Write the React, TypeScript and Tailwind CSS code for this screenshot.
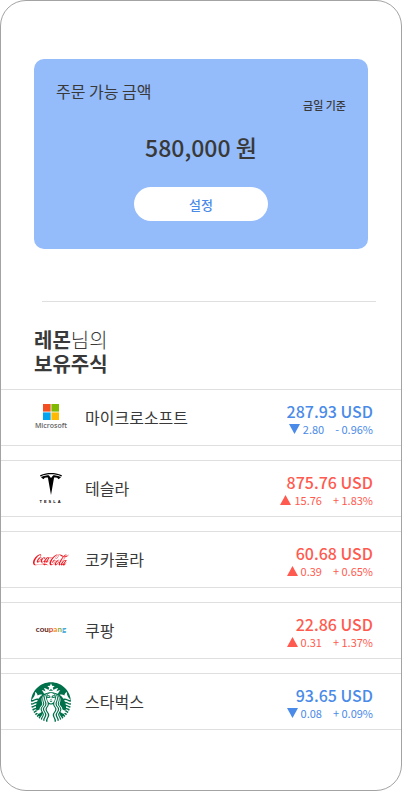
import type { ReactNode } from 'react';
import { SiCocacola, SiStarbucks, SiTesla } from 'react-icons/si';

type Stock = {
  name: string;
  price: string;
  change: string;
  rate: string;
  arrow: 'up' | 'down';
  logo: ReactNode;
};

function MicrosoftLogo() {
  return (
    <div className="flex flex-col items-center">
      <svg viewBox="0 0 16 16" className="size-4" aria-hidden="true">
        <rect width="7.6" height="7.6" fill="#f25022" />
        <rect x="8.4" width="7.6" height="7.6" fill="#7fba00" />
        <rect y="8.4" width="7.6" height="7.6" fill="#00a4ef" />
        <rect x="8.4" y="8.4" width="7.6" height="7.6" fill="#ffb900" />
      </svg>
      <span className="font-['Open_Sans',sans-serif] text-[7px] leading-[11px] font-semibold text-[#666666]">
        Microsoft
      </span>
    </div>
  );
}

function TeslaLogo() {
  return (
    <div className="flex flex-col items-center text-black">
      <SiTesla className="size-[22px]" aria-hidden="true" />
      <span className="mt-1 font-['Liberation_Sans',sans-serif] text-[4px] leading-[6px] font-bold tracking-[2px]">
        TESLA
      </span>
    </div>
  );
}

function CoupangLogo() {
  return (
    <span className="pb-1 font-['Lato',sans-serif] text-[8px] leading-3 font-bold text-[#5a2320]">
      cou<span className="text-[#d9452c]">p</span>
      <span className="text-[#f0901e]">a</span>
      <span className="text-[#8fae3a]">n</span>
      <span className="text-[#35a3d8]">g</span>
    </span>
  );
}

const stocks: Stock[] = [
  { name: '마이크로소프트', price: '287.93', change: '2.80', rate: '- 0.96%', arrow: 'down', logo: <MicrosoftLogo /> },
  { name: '테슬라', price: '875.76', change: '15.76', rate: '+ 1.83%', arrow: 'up', logo: <TeslaLogo /> },
  {
    name: '코카콜라',
    price: '60.68',
    change: '0.39',
    rate: '+ 0.65%',
    arrow: 'up',
    logo: <SiCocacola className="size-9 text-[#ed1c24]" aria-hidden="true" />,
  },
  { name: '쿠팡', price: '22.86', change: '0.31', rate: '+ 1.37%', arrow: 'up', logo: <CoupangLogo /> },
  {
    name: '스타벅스',
    price: '93.65',
    change: '0.08',
    rate: '+ 0.09%',
    arrow: 'down',
    logo: <SiStarbucks className="size-10 text-[#00704a]" aria-hidden="true" />,
  },
];

function StockRow({ stock }: { stock: Stock }) {
  const up = stock.arrow === 'up';
  return (
    <li className="flex h-[57px] items-center border-y border-[#dfdfdf] pr-7 pl-[30px]">
      <div className="flex w-10 shrink-0 justify-center">{stock.logo}</div>
      <span className="ml-[14px] pb-[2px] text-base leading-6">{stock.name}</span>
      <div className={`ml-auto pt-[2px] text-right ${up ? 'text-[#ff5a4f]' : 'text-[#4a8ae8]'}`}>
        <p className="text-base leading-5 font-medium">{stock.price} USD</p>
        <p className="flex items-center justify-end text-[11px] leading-4">
          <svg viewBox="0 0 11 10" className="mr-[3px] h-[10px] w-[11px]" aria-hidden="true">
            <path d={up ? 'M5.5 0 11 10H0Z' : 'M0 0H11L5.5 10Z'} fill="currentColor" />
          </svg>
          {stock.change}
          <span className="ml-[11px]">{stock.rate}</span>
        </p>
      </div>
    </li>
  );
}

export default function App() {
  return (
    <main className="min-h-[791px] rounded-[26px] border border-[#a3a3a3] bg-white pt-[58px] font-['Noto_Sans_CJK_KR',sans-serif] text-[#393939]">
      <section className="mx-[33px] rounded-[10px] bg-[#94bbfa] px-[22px] pt-5 pb-7">
        <div className="flex items-start justify-between">
          <h1 className="text-base leading-6">주문 가능 금액</h1>
          <p className="pt-[18px] text-[11px] leading-4 font-medium">금일 기준</p>
        </div>
        <p className="mt-[18px] text-center text-[23px] leading-8 font-medium">580,000 원</p>
        <button
          type="button"
          className="mx-auto mt-6 block h-[34px] w-[134px] rounded-full bg-white pt-px text-[13px] font-medium text-[#4a8ae8]"
        >
          설정
        </button>
      </section>
      <hr className="mt-[52px] mr-[25px] ml-[41px] border-[#dfdfdf]" />
      <h2 className="mt-[26px] ml-[33px] text-xl leading-6 font-bold">
        레몬<span className="font-light">님의</span>
        <br />
        보유주식
      </h2>
      <ul className="mt-[13px] flex flex-col gap-[14px]">
        {stocks.map((stock) => (
          <StockRow key={stock.name} stock={stock} />
        ))}
      </ul>
    </main>
  );
}
